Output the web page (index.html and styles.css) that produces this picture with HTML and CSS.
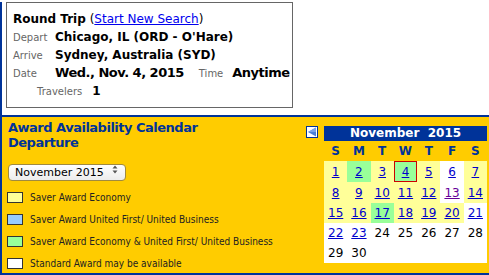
FILE: index.html
```html
<!DOCTYPE html>
<html lang="en">
<head>
    <meta charset="UTF-8">
    <meta name="viewport" content="width=device-width, initial-scale=1.0">
    <title>Award Availability</title>
    <link rel="stylesheet" href="styles.css">
</head>
<body>
<div class="page">

    <!-- Search summary -->
    <div class="trip">
        <div class="trip-title"><b>Round Trip</b> (<a href="#">Start New Search</a>)</div>
        <div class="trip-row">
            <span class="lbl">Depart</span>
            <span class="val">Chicago, IL (ORD - O'Hare)</span>
        </div>
        <div class="trip-row">
            <span class="lbl">Arrive</span>
            <span class="val">Sydney, Australia (SYD)</span>
        </div>
        <div class="trip-row">
            <span class="lbl">Date</span>
            <span class="val big">Wed., Nov. 4, 2015</span>
            <span class="lbl lbl-time">Time</span>
            <span class="val big">Anytime</span>
        </div>
        <div class="trip-row travelers">
            <span class="lbl">Travelers</span>
            <span class="val">1</span>
        </div>
    </div>

    <!-- Award calendar -->
    <div class="award">
        <div class="award-left">
            <h2>Award Availability Calendar<br>Departure</h2>
            <div class="month-select">
                <select>
                    <option>November 2015</option>
                    <option>December 2015</option>
                </select>
                <svg class="select-arrows" width="6" height="9" viewBox="0 0 6 9">
                    <polygon points="3,0.5 5.5,3.5 0.5,3.5" fill="#555"/>
                    <polygon points="0.5,5.5 5.5,5.5 3,8.5" fill="#555"/>
                </svg>
            </div>
            <ul class="legend">
                <li><span class="swatch economy"></span>Saver Award Economy</li>
                <li><span class="swatch business"></span>Saver Award United First/ United Business</li>
                <li><span class="swatch both"></span>Saver Award Economy &amp; United First/ United Business</li>
                <li><span class="swatch standard"></span>Standard Award may be available</li>
            </ul>
        </div>

        <div class="award-right">
            <a class="prev" href="#">
                <svg width="12" height="12" viewBox="0 0 12 12">
                    <rect x="0.5" y="0.5" width="11" height="11" fill="#fff" stroke="#003399"/>
                    <polygon points="2,6 10,1.5 10,10.5" fill="#4a7fd4"/>
                    <polygon points="2,6 10,1.5 10,6" fill="#7aa3e6"/>
                </svg>
            </a>
            <div class="cal">
                <div class="cal-title">November&nbsp;&nbsp;2015</div>
                <div class="cal-dow">
                    <span>S</span><span>M</span><span>T</span><span>W</span><span>T</span><span>F</span><span>S</span>
                </div>
                <div class="cal-days" id="calDays"></div>
            </div>
        </div>
    </div>
</div>

<script>
    // type: y = saver economy, g = economy + business, w = no saver, n = not bookable
    const days = [
        'y','g','y','g','y','w','y',
        'y','y','y','y','y','v','y',
        'y','y','g','y','y','y','w',
        'w','w','n','n','n','n','n',
        'n','n'
    ];
    const selected = 4;

    const grid = document.getElementById('calDays');
    grid.innerHTML = days.map((t, i) => {
        const d = i + 1;
        let cls = 'day';
        if (t === 'y') cls += ' saver';
        if (t === 'g') cls += ' both';
        if (d === selected) cls += ' selected';
        if (t === 'n') return `<div class="${cls}">${d}</div>`;
        const link = t === 'v' ? 'visited' : '';
        return `<div class="${cls}"><a href="#" class="${link}">${d}</a></div>`;
    }).join('');
</script>
</body>
</html>
```

FILE: styles.css
```css
body {
    margin: 0;
    font-family: "DejaVu Sans", Verdana, sans-serif;
    background: #fff;
    color: #000;
}

.page {
    border-left: 2px solid #003399;
    min-height: 275px;
    box-sizing: border-box;
}

/* search summary box */
.trip {
    margin: 2px 0 0 4px;
    width: 287px;
    height: 106px;
    border: 1px solid #666;
    box-sizing: border-box;
    padding: 7px 0 0 6px;
    font-size: 12px;
}

.trip-title,
.trip-row {
    height: 18px;
    line-height: 18px;
    white-space: nowrap;
}

.trip-title a {
    color: #0000ee;
}

.trip-row {
    display: flex;
    align-items: baseline;
}

.lbl {
    width: 42px;
    font-size: 10px;
    color: #666;
}

.val {
    font-weight: bold;
}

.val.big {
    font-size: 13px;
    letter-spacing: -0.5px;
}

.lbl-time {
    width: auto;
    margin: 0 9px 0 15px;
}

.travelers {
    padding-left: 24px;
}

.travelers .lbl {
    width: auto;
    margin-right: 10px;
}

/* award calendar panel */
.award {
    margin-top: 7px;
    height: 156px;
    background: #ffcc00;
    border-top: 2px solid #003399;
    border-bottom: 2px solid #003399;
    display: flex;
    justify-content: space-between;
}

.award-left {
    padding: 3px 0 0 6px;
}

.award-left h2 {
    margin: 0;
    font-size: 13px;
    line-height: 15px;
    letter-spacing: -0.5px;
    color: #003399;
}

.month-select {
    position: relative;
    width: 118px;
    margin-top: 11px;
}

.month-select select {
    appearance: none;
    -webkit-appearance: none;
    width: 118px;
    height: 17px;
    padding: 0 0 0 6px;
    border: 1px solid #a08a40;
    border-radius: 4px;
    background: linear-gradient(#ffffff, #ececec);
    font-family: "DejaVu Sans", Verdana, sans-serif;
    font-size: 11px;
    color: #000;
}

.select-arrows {
    position: absolute;
    right: 8px;
    top: 4px;
}

.legend {
    list-style: none;
    margin: 5px 0 0 0;
    padding: 0;
}

.legend li {
    height: 22px;
    display: flex;
    align-items: center;
    font-family: "DejaVu Sans Condensed", "DejaVu Sans", sans-serif;
    font-stretch: condensed;
    font-size: 10px;
    color: #222;
    white-space: nowrap;
}

.swatch {
    width: 16px;
    height: 11px;
    box-sizing: border-box;
    border: 1px solid #333;
    margin: 0 7px 0 -1px;
}

.swatch.economy { background: #ffff99; }
.swatch.business { background: #99ccff; }
.swatch.both { background: #99ff99; }
.swatch.standard { background: #fff; }

.award-right {
    display: flex;
    align-items: flex-start;
    gap: 6px;
    padding-top: 9px;
    margin-right: 2px;
}

.prev {
    display: block;
    width: 12px;
    height: 12px;
}

.prev svg {
    display: block;
}

.cal {
    width: 163px;
}

.cal-title {
    height: 15px;
    line-height: 15px;
    background: #003399;
    color: #fff;
    font-weight: bold;
    font-size: 12px;
    text-align: center;
}

.cal-dow {
    display: grid;
    grid-template-columns: repeat(7, 1fr);
    height: 20px;
    line-height: 20px;
    text-align: center;
    font-weight: bold;
    font-size: 12px;
    color: #003399;
}

.cal-days {
    display: grid;
    grid-template-columns: repeat(7, 1fr);
    grid-template-rows: 21px 21px 20px 20px 20px;
    background: #fff;
    font-size: 12px;
    text-align: center;
}

.day {
    display: flex;
    align-items: center;
    justify-content: center;
    box-sizing: border-box;
}

.day a {
    color: #0000cc;
}

.day a.visited {
    color: #660099;
}

.day.saver { background: #ffff99; }
.day.both { background: #99ff99; }

.day.selected {
    border: 1px solid #cc0000;
}
```
